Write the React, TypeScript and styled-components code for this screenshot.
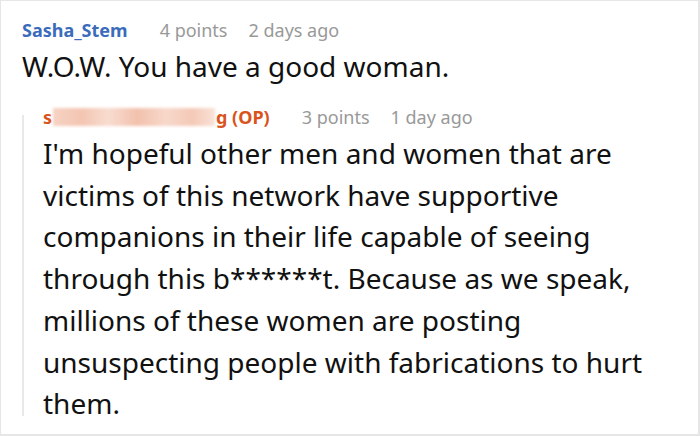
import styled, { createGlobalStyle } from "styled-components";

const GlobalStyle = createGlobalStyle`
  html, body {
    margin: 0;
    padding: 0;
    background: #ffffff;
  }
  body {
    font-family: "Noto Sans", "Open Sans", sans-serif;
  }
`;

const Frame = styled.div`
  box-sizing: border-box;
  width: 700px;
  height: 436px;
  border: 2px solid #e6e6e6;
  border-left-width: 1px;
  border-top-width: 1px;
  background: #ffffff;
  padding: 17px 0 0 21px;
  overflow: hidden;
`;

const Meta = styled.div`
  display: flex;
  align-items: baseline;
  gap: 21px;
  font-size: 18px;
  line-height: 24px;
  color: #999999;
`;

const Author = styled.span<{ $tone: "blue" | "orange" }>`
  font-weight: 700;
  color: ${(p) => (p.$tone === "blue" ? "#3b6cbc" : "#d9541c")};
  margin-right: 11px;
  display: inline-flex;
  align-items: center;
`;

const Blurred = styled.span`
  display: inline-block;
  width: 162px;
  height: 18px;
  margin: 0 1px;
  background: linear-gradient(
    90deg,
    #f6d2c3 0%,
    #f3c5b2 18%,
    #f8dcd0 34%,
    #f2c1ad 52%,
    #f7d8ca 70%,
    #f4c9b7 86%,
    #f9e2d8 100%
  );
  filter: blur(1.5px);
`;

const Body = styled.p<{ $lh: number; $top: number }>`
  margin: ${(p) => p.$top}px 0 0;
  color: #111111;
  font-size: 28px;
  line-height: ${(p) => p.$lh}px;
  white-space: nowrap;
`;

const Line = styled.span`
  display: block;
`;

const Reply = styled.div`
  display: flex;
  gap: 19px;
  margin-top: 17px;
`;

const Rail = styled.div`
  width: 2px;
  flex: none;
  background: #e8e8e8;
  margin: 10px 0 9px;
`;

const ReplyContent = styled.div`
  display: flex;
  flex-direction: column;
`;

const replyLines = [
  "I'm hopeful other men and women that are",
  "victims of this network have supportive",
  "companions in their life capable of seeing",
  "through this b******t. Because as we speak,",
  "millions of these women are posting",
  "unsuspecting people with fabrications to hurt",
  "them.",
];

export default function App() {
  return (
    <>
      <GlobalStyle />
      <Frame>
        <Meta>
          <Author $tone="blue">Sasha_Stem</Author>
          <span>4 points</span>
          <span>2 days ago</span>
        </Meta>
        <Body $lh={44} $top={2}>
          W.O.W. You have a good woman.
        </Body>
        <Reply>
          <Rail />
          <ReplyContent>
            <Meta>
              <Author $tone="orange">
                s<Blurred />g (OP)
              </Author>
              <span>3 points</span>
              <span>1 day ago</span>
            </Meta>
            <Body $lh={41.7} $top={4}>
              {replyLines.map((l) => (
                <Line key={l}>{l}</Line>
              ))}
            </Body>
          </ReplyContent>
        </Reply>
      </Frame>
    </>
  );
}
